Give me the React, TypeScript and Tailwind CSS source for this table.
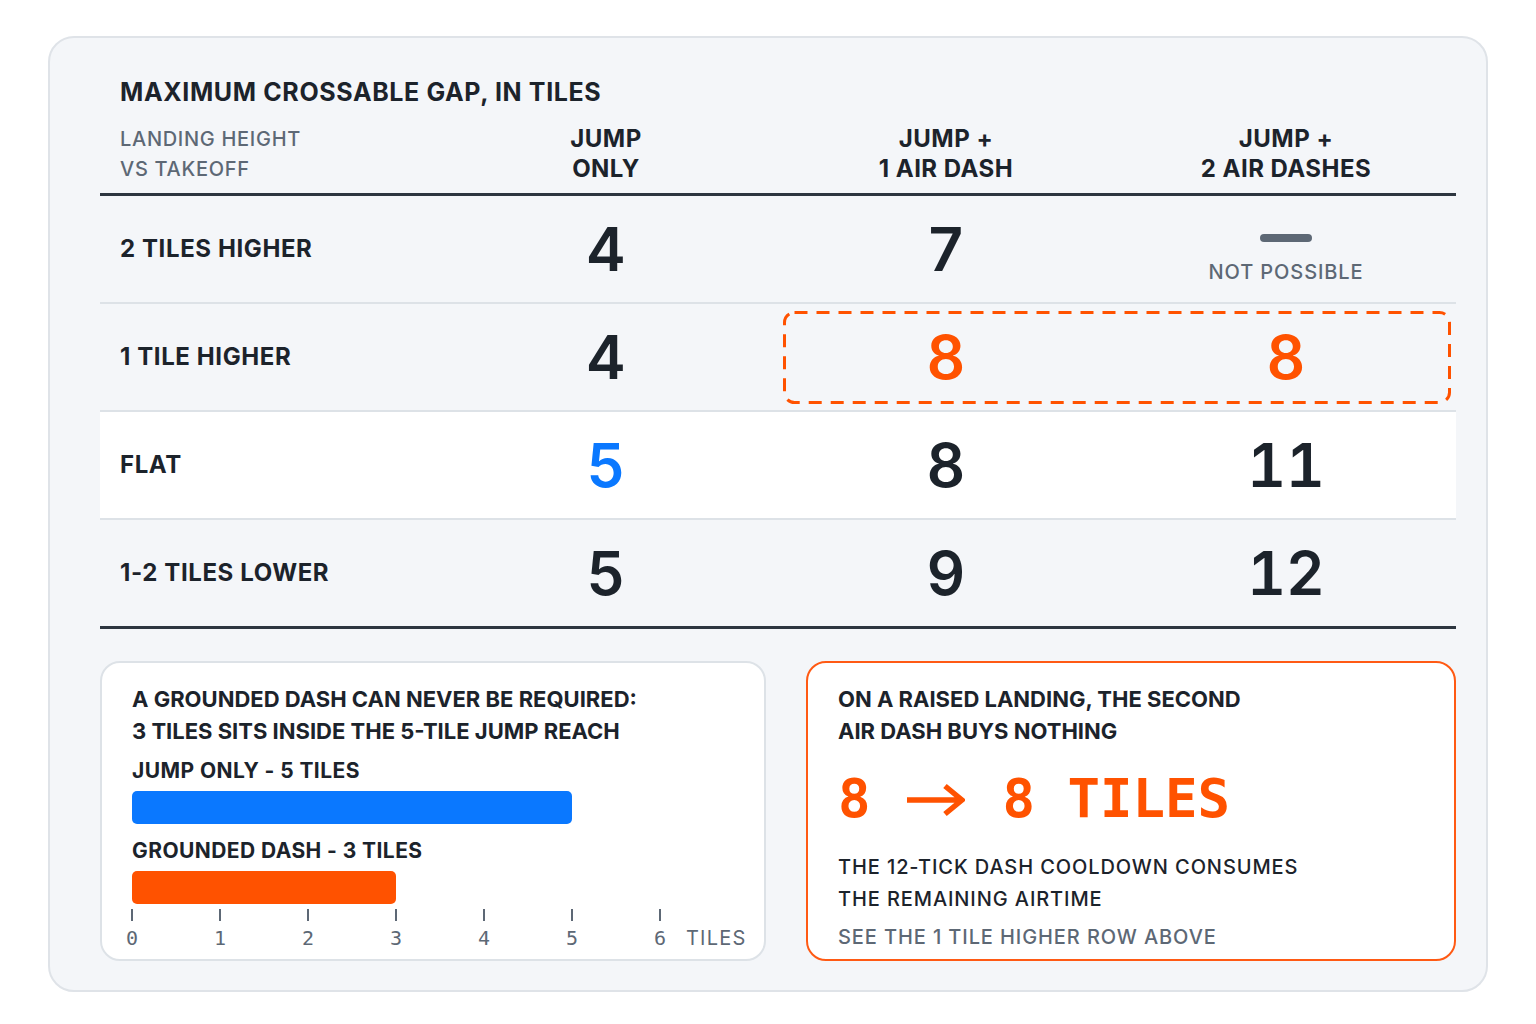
import React from "react";

const sans = { fontFamily: "Inter, 'Noto Sans', sans-serif" };
const mono = { fontFamily: "'DejaVu Sans Mono', 'Liberation Mono', monospace" };

function Num({ v, color = "text-[#1c232b]" }: { v: string; color?: string }) {
  return (
    <div className={`flex items-center justify-center text-[60px] font-semibold leading-none tabular-nums ${color}`}>{v}</div>
  );
}

function Label({ t }: { t: string }) {
  return <div className="flex items-center pl-5 text-[24px] font-bold tracking-[0.025em] text-[#1c232b]">{t}</div>;
}

export default function App() {
  const ticks = [0, 1, 2, 3, 4, 5, 6];
  return (
    <div className="min-h-[1024px] w-[1536px] bg-white pl-[48px] pt-[36px]" style={sans}>
      <div className="h-[956px] w-[1440px] rounded-[26px] border-2 border-[#dfe3e8] bg-[#f4f6f9] pl-[50px] pr-[30px] pt-[38px]">
        <div className="pl-5 text-[25px] font-bold leading-[32px] tracking-[0.025em] text-[#1c232b]">
          MAXIMUM CROSSABLE GAP, IN TILES
        </div>
        {/* header */}
        <div className="mt-[16px] grid grid-cols-[336px_340px_340px_340px] border-b-[3px] border-[#2d3640] pb-[9px]">
          <div className="pl-5 text-[20px] font-medium leading-[30px] tracking-[0.035em] text-[#5d6875]">
            LANDING HEIGHT
            <br />
            VS TAKEOFF
          </div>
          <div className="text-center text-[24px] font-bold leading-[30px] tracking-[0.02em] text-[#1c232b]">
            JUMP
            <br />
            ONLY
          </div>
          <div className="text-center text-[24px] font-bold leading-[30px] tracking-[0.02em] text-[#1c232b]">
            JUMP +
            <br />
            1 AIR DASH
          </div>
          <div className="text-center text-[24px] font-bold leading-[30px] tracking-[0.02em] text-[#1c232b]">
            JUMP +
            <br />
            2 AIR DASHES
          </div>
        </div>
        {/* rows */}
        <div className="grid h-[108px] grid-cols-[336px_340px_340px_340px] border-b-2 border-[#dde2e7]">
          <Label t="2 TILES HIGHER" />
          <Num v="4" />
          <Num v="7" />
          <div className="flex flex-col items-center justify-center pt-[20px]">
            <div className="h-[8px] w-[52px] rounded-full bg-[#5d6875]" />
            <div className="mt-[18px] text-[20px] font-medium leading-[24px] tracking-[0.045em] text-[#5d6875]">NOT POSSIBLE</div>
          </div>
        </div>
        <div className="relative grid h-[108px] grid-cols-[336px_340px_340px_340px] border-b-2 border-[#dde2e7]">
          <Label t="1 TILE HIGHER" />
          <Num v="4" />
          <Num v="8" color="text-[#ff5200]" />
          <Num v="8" color="text-[#ff5200]" />
          <svg className="pointer-events-none absolute left-[683px] top-[7px]" width="668" height="93" viewBox="0 0 668 93">
            <rect x="1.5" y="1.5" width="665" height="90" rx="10" fill="none" stroke="#ff5200" strokeWidth="3" strokeDasharray="13 9" />
          </svg>
        </div>
        <div className="grid h-[108px] grid-cols-[336px_340px_340px_340px] border-b-2 border-[#dde2e7] bg-white">
          <Label t="FLAT" />
          <Num v="5" color="text-[#0a78ff]" />
          <Num v="8" />
          <Num v="11" />
        </div>
        <div className="grid h-[109px] grid-cols-[336px_340px_340px_340px] border-b-[3px] border-[#2d3640]">
          <Label t="1-2 TILES LOWER" />
          <Num v="5" />
          <Num v="9" />
          <Num v="12" />
        </div>

        {/* bottom cards */}
        <div className="mt-[32px] flex gap-[40px]">
          <div className="h-[300px] w-[666px] shrink-0 rounded-[20px] border-2 border-[#dde2e7] bg-white pl-[30px] pt-[20px]">
            <div className="text-[22px] font-bold leading-[32px] text-[#1c232b]">
              A GROUNDED DASH CAN NEVER BE REQUIRED:
              <br />3 TILES SITS INSIDE THE 5-TILE JUMP REACH
            </div>
            <div className="mt-[8px] text-[21px] font-bold leading-[32px] tracking-[0.02em] text-[#1c232b]">JUMP ONLY - 5 TILES</div>
            <div className="mt-[4px] h-[33px] w-[440px] rounded-[5px] bg-[#0a78ff]" />
            <div className="mt-[11px] text-[21px] font-bold leading-[32px] tracking-[0.02em] text-[#1c232b]">GROUNDED DASH - 3 TILES</div>
            <div className="mt-[4px] h-[33px] w-[264px] rounded-[5px] bg-[#ff5200]" />
            <div className="relative mt-[5px] h-[42px] w-[620px]" style={mono}>
              {ticks.map((t) => (
                <div key={t} className="absolute top-0 flex w-[30px] -translate-x-1/2 flex-col items-center" style={{ left: t * 88 }}>
                  <div className="h-[12px] w-[2px] bg-[#5d6875]" />
                  <div className="mt-[5px] text-[20px] leading-[24px] text-[#5d6875]">{t}</div>
                </div>
              ))}
              <div className="absolute left-[554px] top-[17px] text-[20px] leading-[24px] tracking-[0.06em] text-[#5d6875]" style={sans}>
                TILES
              </div>
            </div>
          </div>
          <div className="h-[300px] w-[650px] shrink-0 rounded-[20px] border-2 border-[#ff5a14] bg-white pl-[30px] pt-[20px]">
            <div className="text-[22px] font-bold leading-[32px] text-[#1c232b]">
              ON A RAISED LANDING, THE SECOND
              <br />
              AIR DASH BUYS NOTHING
            </div>
            <div className="mt-[20px] flex h-[64px] items-center text-[54px] font-bold leading-[64px] text-[#ff5200]" style={mono}>
              <span>8</span>
              <svg className="ml-[36px] mt-[2px]" width="58" height="34" viewBox="0 0 58 34" aria-hidden="true">
                <path d="M0 17 H54 M38 3 L55 17 L38 31" fill="none" stroke="#ff5200" strokeWidth="5.5" strokeLinejoin="miter" />
              </svg>
              <span className="ml-[38px] whitespace-pre">8 TILES</span>
            </div>
            <div className="mt-[20px] text-[20px] font-medium leading-[32px] tracking-[0.045em] text-[#1c232b]">
              THE 12-TICK DASH COOLDOWN CONSUMES
              <br />
              THE REMAINING AIRTIME
            </div>
            <div className="mt-[6px] text-[20px] font-medium leading-[32px] tracking-[0.045em] text-[#5d6875]">SEE THE 1 TILE HIGHER ROW ABOVE</div>
          </div>
        </div>
      </div>
    </div>
  );
}
